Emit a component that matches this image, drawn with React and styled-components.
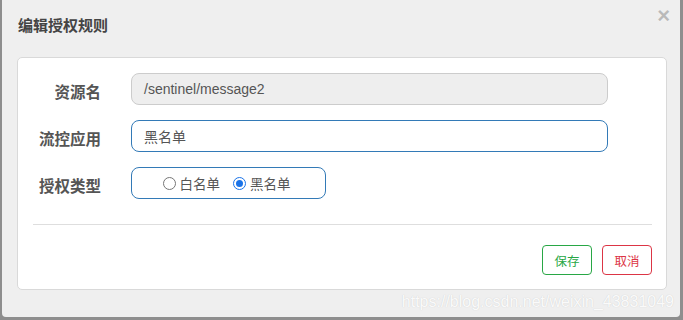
import React from "react";
import styled, { createGlobalStyle } from "styled-components";

const GlobalStyle = createGlobalStyle`
  html, body {
    margin: 0;
    padding: 0;
    background: #8e8e8e;
  }
  * {
    box-sizing: border-box;
  }
`;

const Backdrop = styled.div`
  width: 683px;
  height: 320px;
  background: #8e8e8e;
  padding: 0 3px 3px 2px;
  font-family: "Liberation Sans", Arial, "Noto Sans CJK SC", sans-serif;
`;

const Modal = styled.div`
  width: 678px;
  height: 317px;
  background: #efefef;
  border-radius: 0 0 4px 4px;
  display: flex;
  flex-direction: column;
  position: relative;
`;

const Header = styled.div`
  height: 57px;
  display: flex;
  align-items: flex-start;
  justify-content: space-between;
  padding: 14px 10px 0 16px;
`;

const Title = styled.h4`
  margin: 0;
  font-family: "Noto Sans CJK SC", sans-serif;
  font-size: 15px;
  line-height: 22px;
  font-weight: 700;
  color: #444;
`;

const Close = styled.button`
  border: 0;
  background: transparent;
  padding: 0;
  margin-top: -9px;
  font-family: "Liberation Sans", Arial, sans-serif;
  font-size: 22px;
  font-weight: 700;
  line-height: 22px;
  color: #000;
  opacity: 0.22;
  text-shadow: 0 1px 0 #fff;
`;

const Card = styled.div`
  margin: 0 13px 0 15px;
  height: 233px;
  background: #fff;
  border: 1px solid #d9d9d9;
  border-radius: 5px;
  padding: 15px 14px 15px 0;
  display: flex;
  flex-direction: column;
`;

const Form = styled.div`
  display: grid;
  grid-template-columns: 83px 477px;
  column-gap: 30px;
  row-gap: 15px;
  align-items: center;
`;

const Label = styled.label`
  text-align: right;
  font-family: "Noto Sans CJK SC", sans-serif;
  font-size: 15.5px;
  font-weight: 700;
  color: #555;
  padding-top: 3px;
`;

const Input = styled.div`
  height: 32px;
  border-radius: 8px;
  border: 1px solid ${(p) => (p.$disabled ? "#cccccc" : "#337ab7")};
  background: ${(p) => (p.$disabled ? "#eeeeee" : "#fff")};
  color: #555;
  font-size: 14px;
  display: flex;
  align-items: center;
  padding: 0 12px;
  font-family: "Liberation Sans", Arial, "Noto Sans CJK SC", sans-serif;
`;

const RadioGroup = styled.div`
  width: 195px;
  height: 32px;
  border: 1px solid #337ab7;
  border-radius: 8px;
  display: flex;
  align-items: center;
  justify-content: center;
  gap: 13px;
  padding-right: 4px;
`;

const RadioItem = styled.span`
  display: flex;
  align-items: center;
  gap: 4px;
  font-family: "Noto Sans CJK SC", sans-serif;
  font-size: 13.5px;
  color: #555;
`;

const Circle = styled.span`
  width: 13px;
  height: 13px;
  border-radius: 50%;
  border: 1px solid ${(p) => (p.$checked ? "#1a73e8" : "#767676")};
  display: flex;
  align-items: center;
  justify-content: center;
  background: #fff;

  &::after {
    content: "";
    width: 7px;
    height: 7px;
    border-radius: 50%;
    background: ${(p) => (p.$checked ? "#1a73e8" : "transparent")};
  }
`;

const Divider = styled.hr`
  height: 0;
  border: 0;
  border-top: 1px solid #dedede;
  margin: 25px 0 20px 15px;
`;

const Footer = styled.div`
  display: flex;
  justify-content: flex-end;
  gap: 10px;
`;

const Button = styled.button`
  width: 50px;
  height: 30px;
  border-radius: 4px;
  background: #fff;
  border: 1px solid ${(p) => p.$color};
  color: ${(p) => p.$color};
  font-family: "Noto Sans CJK SC", sans-serif;
  font-size: 12.5px;
  padding: 0;
`;

const Watermark = styled.div`
  position: absolute;
  right: 6px;
  bottom: 6px;
  font-family: "Liberation Sans", Arial, sans-serif;
  font-size: 16px;
  color: rgba(255, 255, 255, 0.92);
  text-shadow: 0 0 1px #c8c8c8;
`;

const App = () => {
  return (
    <>
      <GlobalStyle />
      <Backdrop>
        <Modal>
          <Header>
            <Title>编辑授权规则</Title>
            <Close>×</Close>
          </Header>
          <Card>
            <Form>
              <Label>资源名</Label>
              <Input $disabled>/sentinel/message2</Input>
              <Label>流控应用</Label>
              <Input>黑名单</Input>
              <Label>授权类型</Label>
              <RadioGroup>
                <RadioItem>
                  <Circle />
                  白名单
                </RadioItem>
                <RadioItem>
                  <Circle $checked />
                  黑名单
                </RadioItem>
              </RadioGroup>
            </Form>
            <Divider />
            <Footer>
              <Button $color="#28a745">保存</Button>
              <Button $color="#dc3545">取消</Button>
            </Footer>
          </Card>
          <Watermark>https://blog.csdn.net/weixin_43831049</Watermark>
        </Modal>
      </Backdrop>
    </>
  );
};

export default App;
